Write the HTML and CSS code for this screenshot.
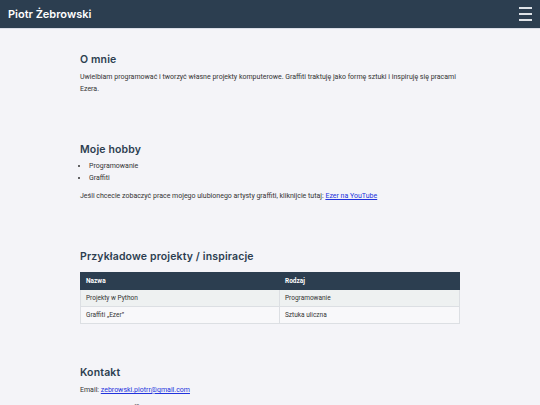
FILE: index.html
```html
<!DOCTYPE html>
<html lang="pl">
<head>
<meta charset="utf-8">
<title>Piotr Żebrowski</title>
<link rel="stylesheet" href="styles.css">
</head>
<body>
<header class="topbar">
  <span class="brand">Piotr Żebrowski</span>
  <button class="burger" aria-label="Menu">
    <span class="bar"></span><span class="bar"></span><span class="bar"></span>
  </button>
</header>
<main class="content">
  <section class="block">
    <h2 class="title">O mnie</h2>
    <p class="text">Uwielbiam programować i tworzyć własne projekty komputerowe. Graffiti traktuję jako formę sztuki i inspiruję się pracami Ezera.</p>
  </section>
  <section class="block">
    <h2 class="title">Moje hobby</h2>
    <ul class="list">
      <li>Programowanie</li>
      <li>Graffiti</li>
    </ul>
    <p class="text">Jeśli chcecie zobaczyć prace mojego ulubionego artysty graffiti, kliknijcie tutaj: <a class="link" href="#">Ezer na YouTube</a></p>
  </section>
  <section class="block">
    <h2 class="title">Przykładowe projekty / inspiracje</h2>
    <table class="grid">
      <thead>
        <tr><th class="col-a">Nazwa</th><th>Rodzaj</th></tr>
      </thead>
      <tbody>
        <tr><td>Projekty w Python</td><td>Programowanie</td></tr>
        <tr><td>Graffiti „Ezer”</td><td>Sztuka uliczna</td></tr>
      </tbody>
    </table>
  </section>
  <section class="block">
    <h2 class="title">Kontakt</h2>
    <p class="text">Email: <a class="link" href="#">zebrowski.piotrr@gmail.com</a></p>
    <p class="text">Discord: LN07graffiti</p>
  </section>
</main>
</body>
</html>
```
FILE: styles.css
```css
html, body {
  margin: 0;
  padding: 0;
}
body {
  background: #f4f4f8;
  font-family: Roboto, "Liberation Sans", sans-serif;
  color: #333;
  font-size: 7px;
  line-height: 12px;
}
.topbar {
  height: 28px;
  background: #2c3e50;
  display: flex;
  align-items: center;
  justify-content: space-between;
  padding: 0 8px 0 8px;
  border-bottom: 1px solid #d9dde6;
}
.brand {
  font-family: Inter, "Open Sans", sans-serif;
  font-weight: 600;
  font-size: 11px;
  color: #ffffff;
}
.burger {
  border: 0;
  background: transparent;
  padding: 0;
  width: 13px;
  display: flex;
  flex-direction: column;
  gap: 4.3px;
}
.bar {
  display: block;
  height: 2px;
  width: 13px;
  background: #dfe3e8;
}
.content {
  width: 380px;
  margin: 0 auto;
  padding-top: 24px;
}
.block {
  padding-bottom: 42px;
}
.title {
  font-family: Inter, "Open Sans", sans-serif;
  font-weight: 600;
  font-size: 10.5px;
  letter-spacing: 0.15px;
  line-height: 14px;
  color: #2c3e50;
  margin: 0 0 4px 0;
}
.text {
  margin: 0 0 6px 0;
}
.list {
  margin: 0 0 6px 0;
  padding-left: 9px;
  line-height: 11.5px;
}
.link {
  color: #2233dd;
}
.grid {
  width: 100%;
  border-collapse: collapse;
  margin-top: 8px;
  font-size: 6.5px;
}
.grid th {
  background: #2c3e50;
  color: #fff;
  font-weight: 700;
  text-align: left;
  height: 16px;
  padding: 0 5px;
  border: 1px solid #2c3e50;
}
.grid td {
  height: 16px;
  padding: 0 5px;
  border: 1px solid #dcdfe3;
}
.grid tbody tr:nth-child(1) td {
  background: #eef1f1;
}
.grid tbody tr:nth-child(2) td {
  background: #f8f8fa;
}
.col-a {
  width: 52.5%;
}
```
